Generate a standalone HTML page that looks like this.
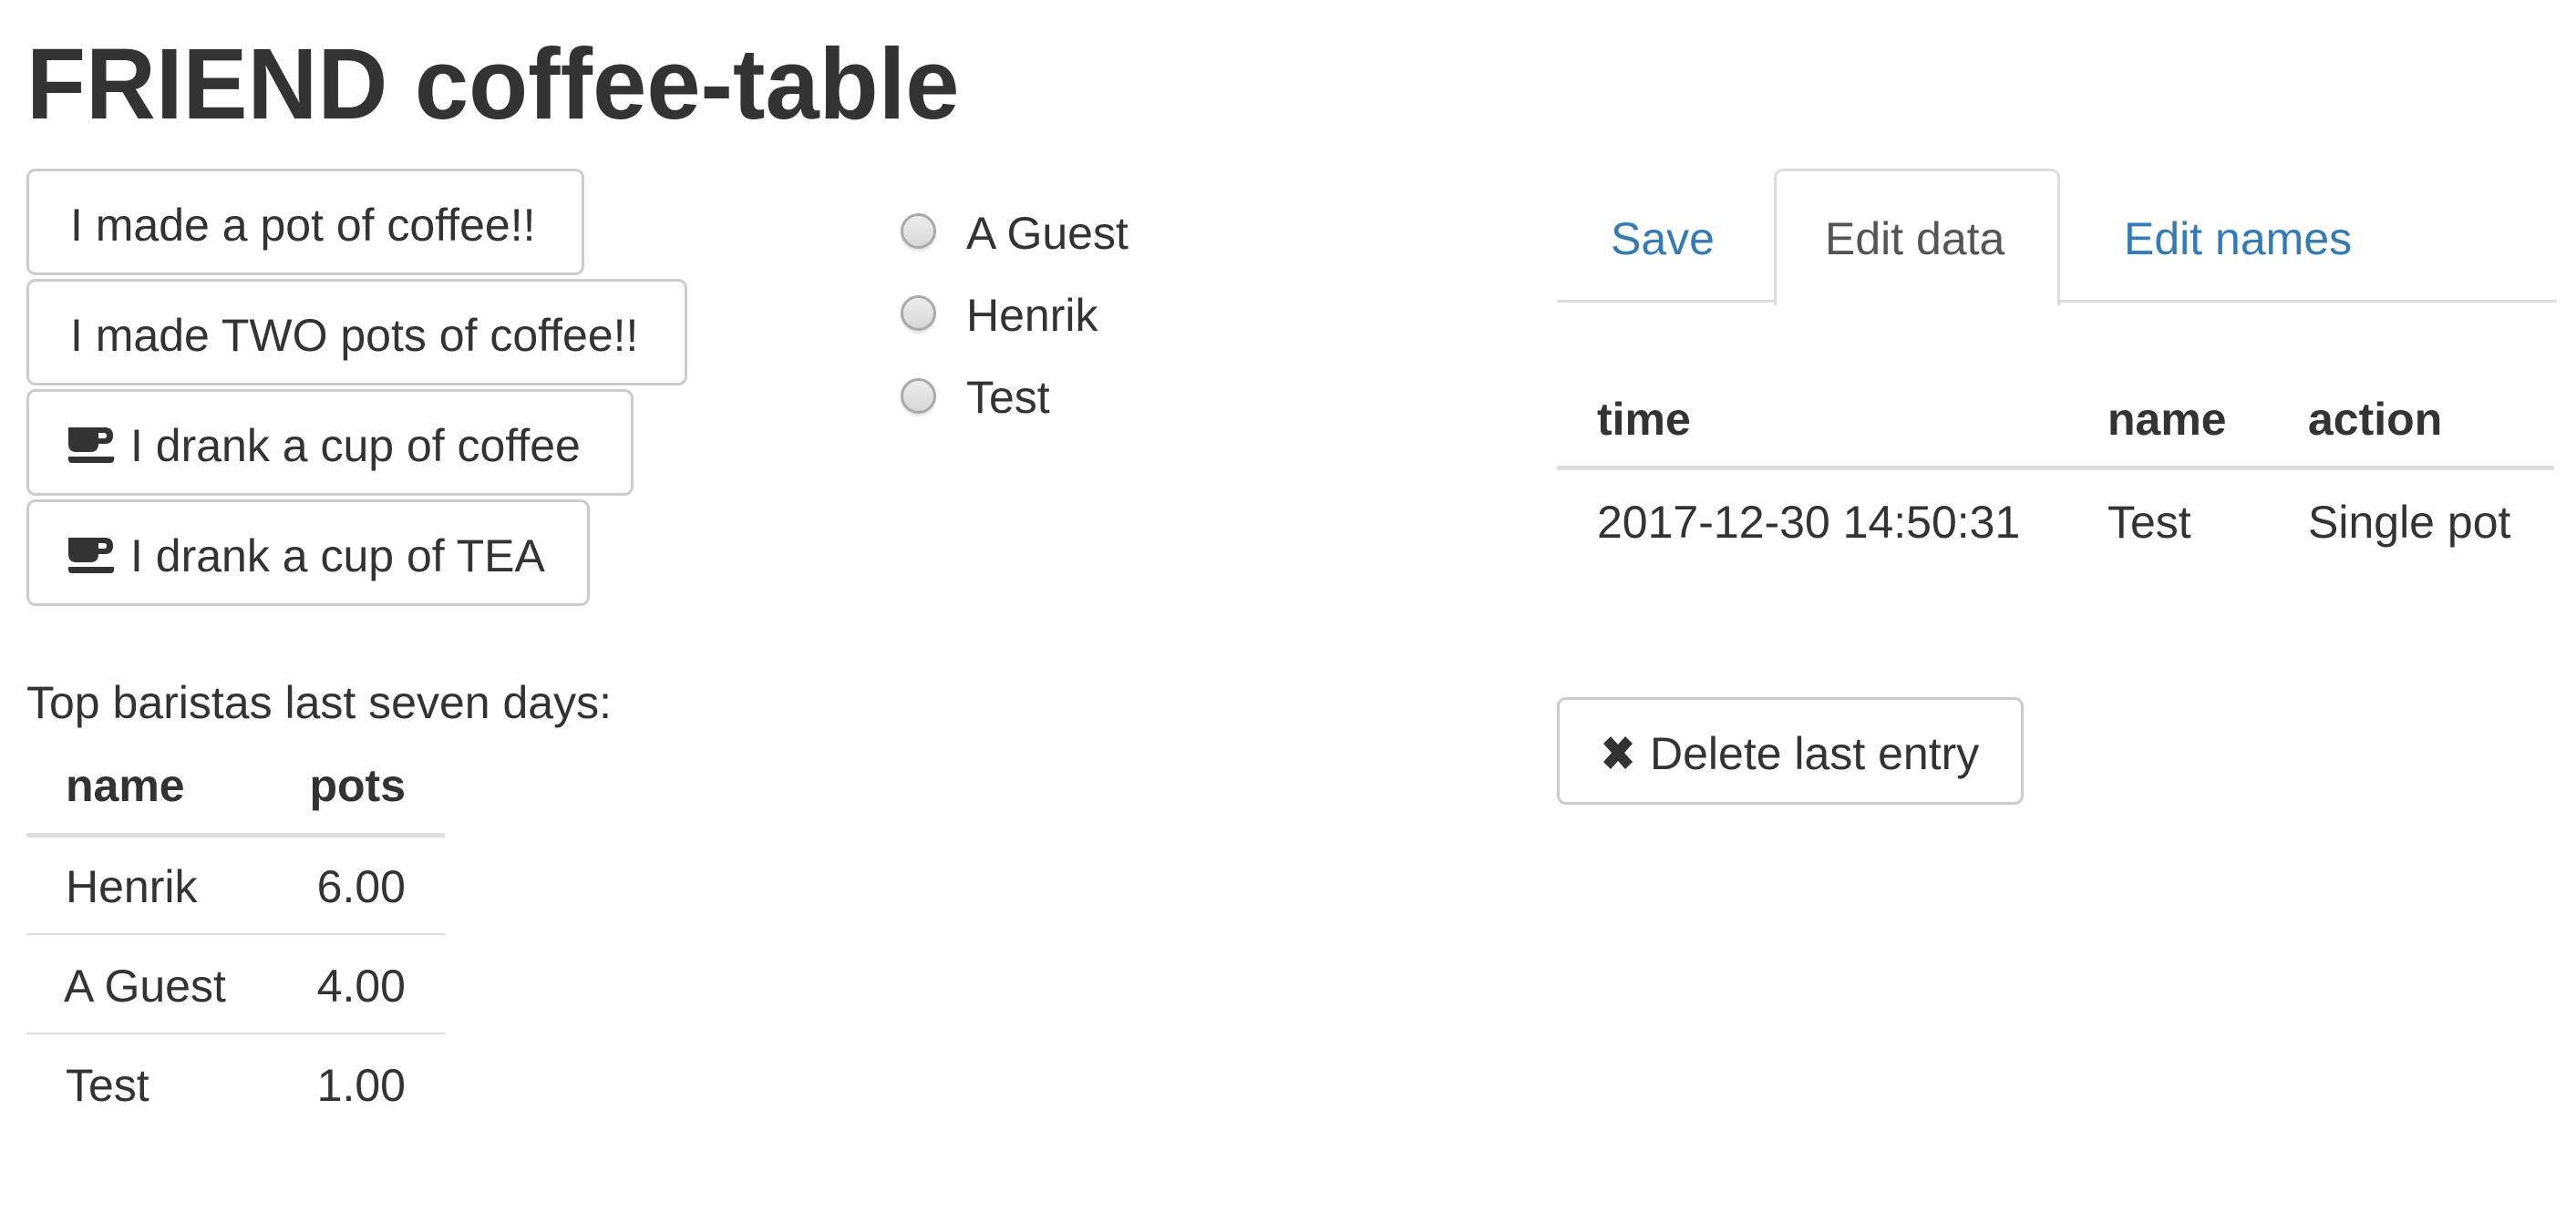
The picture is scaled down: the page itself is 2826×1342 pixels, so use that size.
<!DOCTYPE html>
<html><head><meta charset="utf-8"><style>
html,body{margin:0;padding:0;background:#fff;width:2826px;height:1342px;overflow:hidden;position:relative;font-family:"Liberation Sans",Arial,sans-serif;color:#333}
.t{position:absolute;line-height:1;font-size:50px;white-space:nowrap}
.b{font-weight:bold}
.btn{position:absolute;border:3px solid #ccc;border-radius:10px;background:#fff;box-sizing:border-box}
.radio{position:absolute;width:39px;height:39px;border-radius:50%;box-sizing:border-box;border:3px solid #aaa;background:linear-gradient(#ececec,#d8d8d8);box-shadow:0 3px 2px #e6e6e6}
.hl{position:absolute;background:#ddd}
.r{text-align:right}
</style></head><body>
<div class="t b" style="left:29px;top:38px;font-size:110px;transform:scaleX(0.968);transform-origin:0 0">FRIEND coffee-table</div>

<div class="btn" style="left:29px;top:185px;width:612px;height:117px"></div>
<div class="btn" style="left:29px;top:306px;width:725px;height:117px"></div>
<div class="btn" style="left:29px;top:427px;width:666px;height:117px"></div>
<div class="btn" style="left:29px;top:548px;width:618px;height:117px"></div>
<div class="t" style="left:77px;top:222px">I made a pot of coffee!!</div>
<div class="t" style="left:77px;top:343px">I made TWO pots of coffee!!</div>
<svg style="position:absolute;left:75px;top:469px" width="50" height="40" viewBox="0 0 50 40"><path d="M0 0H33V18Q33 27 24 27H9Q0 27 0 18Z" fill="#333"/><path d="M30 0H40Q49 0 49 9Q49 18 40 18H32V12H39Q42 12 42 9Q42 6 39 6H30Z" fill="#333"/><path d="M0 32H50V35Q50 39 46 39H4Q0 39 0 35Z" fill="#333"/></svg>
<div class="t" style="left:143px;top:464px">I drank a cup of coffee</div>
<svg style="position:absolute;left:75px;top:590px" width="50" height="40" viewBox="0 0 50 40"><path d="M0 0H33V18Q33 27 24 27H9Q0 27 0 18Z" fill="#333"/><path d="M30 0H40Q49 0 49 9Q49 18 40 18H32V12H39Q42 12 42 9Q42 6 39 6H30Z" fill="#333"/><path d="M0 32H50V35Q50 39 46 39H4Q0 39 0 35Z" fill="#333"/></svg>
<div class="t" style="left:143px;top:585px">I drank a cup of TEA</div>

<div class="radio" style="left:988px;top:234px"></div>
<div class="radio" style="left:988px;top:324px"></div>
<div class="radio" style="left:988px;top:415px"></div>
<div class="t" style="left:1060px;top:231px">A Guest</div>
<div class="t" style="left:1060px;top:321px">Henrik</div>
<div class="t" style="left:1060px;top:411px">Test</div>

<div class="t" style="left:29px;top:746px">Top baristas last seven days:</div>
<div class="t b" style="left:72px;top:837px">name</div>
<div class="t b r" style="left:300px;width:145px;top:837px">pots</div>
<div class="hl" style="left:29px;top:914px;width:459px;height:5px"></div>
<div class="t" style="left:72px;top:948px">Henrik</div>
<div class="t r" style="left:300px;width:145px;top:948px">6.00</div>
<div class="hl" style="left:29px;top:1024px;width:459px;height:2px"></div>
<div class="t" style="left:70px;top:1057px">A Guest</div>
<div class="t r" style="left:300px;width:145px;top:1057px">4.00</div>
<div class="hl" style="left:29px;top:1133px;width:459px;height:2px"></div>
<div class="t" style="left:72px;top:1166px">Test</div>
<div class="t r" style="left:300px;width:145px;top:1166px">1.00</div>

<div class="hl" style="left:1708px;top:329px;width:1097px;height:3px"></div>
<div style="position:absolute;left:1946px;top:185px;width:314px;height:150px;box-sizing:border-box;border:3px solid #ddd;border-bottom:none;border-radius:10px 10px 0 0;background:#fff"></div>
<div class="t" style="left:1767px;top:237px;color:#337ab7">Save</div>
<div class="t" style="left:2002px;top:237px;color:#555">Edit data</div>
<div class="t" style="left:2330px;top:237px;color:#337ab7">Edit names</div>

<div class="t b" style="left:1752px;top:435px">time</div>
<div class="t b" style="left:2312px;top:435px">name</div>
<div class="t b" style="left:2532px;top:435px">action</div>
<div class="hl" style="left:1708px;top:511px;width:1094px;height:5px"></div>
<div class="t" style="left:1752px;top:548px">2017-12-30 14:50:31</div>
<div class="t" style="left:2312px;top:548px">Test</div>
<div class="t" style="left:2532px;top:548px">Single pot</div>

<div class="btn" style="left:1708px;top:765px;width:512px;height:118px"></div>
<svg style="position:absolute;left:1757px;top:806px" width="36" height="40" viewBox="0 0 36 40"><path d="M2 10L10 2L18 11L26 2L34 10L25 20L34 30L26 38L18 29L10 38L2 30L11 20Z" fill="#333"/></svg>
<div class="t" style="left:1810px;top:802px">Delete last entry</div>
</body></html>
